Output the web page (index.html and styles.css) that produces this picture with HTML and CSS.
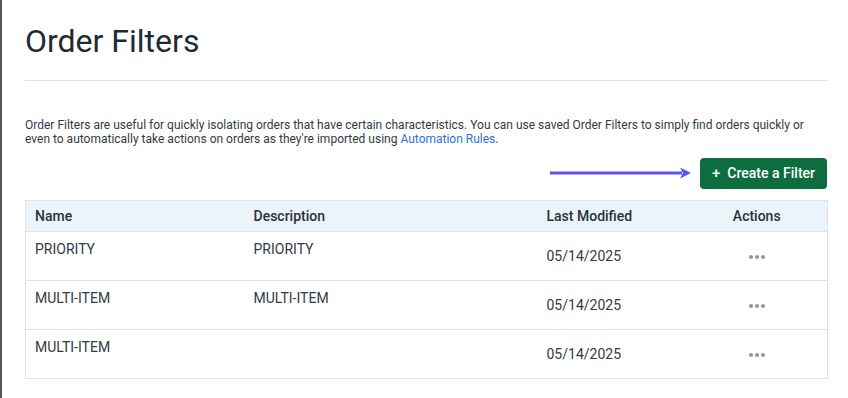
FILE: index.html
```html
<!DOCTYPE html>
<html lang="en">
<head>
<meta charset="utf-8">
<title>Order Filters</title>
<link rel="stylesheet" href="styles.css">
</head>
<body>
<div class="page">
  <h1 class="title">Order Filters</h1>
  <div class="divider"></div>
  <p class="intro">Order Filters are useful for quickly isolating orders that have certain characteristics. You can use saved Order Filters to simply find orders quickly or even to automatically take actions on orders as they're imported using <a class="link" href="#">Automation Rules</a>.</p>
  <div class="toolbar">
    <svg class="arrow" width="142" height="12" viewBox="0 0 142 12">
      <rect x="0" y="4.5" width="132" height="3" fill="#5d52f6"/>
      <path d="M130 0.5 L141 6 L130 11.5 L133 6 Z" fill="#5d52f6"/>
    </svg>
    <button class="btn-create"><span class="plus">+</span>Create a Filter</button>
  </div>
  <table class="filters">
    <colgroup>
      <col class="c-name"><col class="c-desc"><col class="c-date"><col class="c-act">
    </colgroup>
    <thead>
      <tr><th>Name</th><th>Description</th><th>Last Modified</th><th class="center">Actions</th></tr>
    </thead>
    <tbody>
      <tr><td class="top">PRIORITY</td><td class="top">PRIORITY</td><td>05/14/2025</td><td class="center"><span class="dots"><i></i><i></i><i></i></span></td></tr>
      <tr><td class="top">MULTI-ITEM</td><td class="top">MULTI-ITEM</td><td>05/14/2025</td><td class="center"><span class="dots"><i></i><i></i><i></i></span></td></tr>
      <tr><td class="top">MULTI-ITEM</td><td class="top"></td><td>05/14/2025</td><td class="center"><span class="dots"><i></i><i></i><i></i></span></td></tr>
    </tbody>
  </table>
</div>
</body>
</html>
```
FILE: styles.css
```css
html, body {
  margin: 0;
  padding: 0;
  height: 100%;
  background: #ffffff;
}
body {
  border-left: 2px solid #55595e;
  box-sizing: border-box;
  font-family: Roboto, "Liberation Sans", Arial, sans-serif;
  color: #333a44;
}
.page {
  padding: 22px 21px 0 23px;
}
.title {
  margin: 0;
  font-size: 32px;
  line-height: 38px;
  font-weight: 400;
  color: #1f2935;
}
.divider {
  margin-top: 20px;
  height: 1px;
  background: #dfe4e8;
}
.intro {
  margin: 37px 0 0;
  font-size: 12px;
  line-height: 14.4px;
  color: #333a44;
}
.link {
  color: #2f6fde;
  text-decoration: none;
}
.toolbar {
  margin-top: 11px;
  display: flex;
  justify-content: flex-end;
  align-items: center;
  gap: 8px;
}
.arrow {
  display: block;
}
.btn-create {
  height: 31px;
  padding: 0 12px;
  border: none;
  border-radius: 4px;
  background: #0e6d3f;
  color: #ffffff;
  font-family: Roboto, "Liberation Sans", Arial, sans-serif;
  font-size: 14px;
  font-weight: 500;
  display: flex;
  align-items: center;
}
.plus {
  margin-right: 7px;
  font-size: 15px;
}
.filters {
  margin-top: 11px;
  width: 100%;
  border-collapse: collapse;
  table-layout: fixed;
  font-size: 14px;
  line-height: 16px;
  border: 1px solid #dfe3e7;
}
.c-name { width: 219px; }
.c-desc { width: 293px; }
.c-date { width: 149px; }
.c-act { width: 141px; }
.filters th {
  height: 30px;
  background: #ebf4fa;
  text-align: left;
  font-weight: 500;
  color: #29313b;
  padding: 0 9px;
  border-bottom: 1px solid #dfe3e7;
}
.filters td {
  height: 49px;
  padding: 0 9px;
  vertical-align: middle;
  border-bottom: 1px solid #dfe3e7;
  color: #333a44;
  box-sizing: border-box;
}
.filters td.top {
  vertical-align: top;
  padding-top: 9px;
}
.filters .center {
  text-align: center;
}
.dots {
  display: inline-flex;
  gap: 2px;
  vertical-align: middle;
}
.dots i {
  width: 4px;
  height: 4px;
  border-radius: 50%;
  background: #8c98a6;
  display: block;
}
```
